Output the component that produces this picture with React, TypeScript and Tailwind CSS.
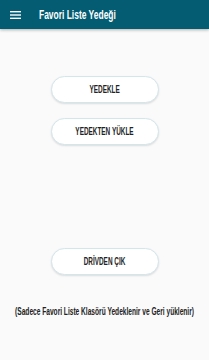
const font = { fontFamily: '"Liberation Sans", "DejaVu Sans", sans-serif' };

function PillButton({ label, className }: { label: string; className: string }) {
  return (
    <button
      className={`${className} w-[108px] h-[27px] rounded-full bg-white border border-[#d3e6ea] shadow-[0_1px_2px_rgba(0,0,0,0.12)] flex items-center justify-center`}
    >
      <span className="inline-block whitespace-nowrap text-[10px] font-bold text-[#222] scale-x-[0.64]">{label}</span>
    </button>
  );
}

export default function App() {
  return (
    <div className="w-[209px] h-[360px] flex flex-col bg-[#fafafa] overflow-hidden" style={font}>
      <div className="h-[29px] shrink-0 bg-[#035c72] flex items-center shadow-[0_1px_3px_rgba(0,0,0,0.3)]">
        <svg width="11" height="8" viewBox="0 0 11 8" className="ml-[10px]">
          <rect x="0" y="0" width="11" height="1.4" fill="#fff" />
          <rect x="0" y="3.3" width="11" height="1.4" fill="#fff" />
          <rect x="0" y="6.6" width="11" height="1.4" fill="#fff" />
        </svg>
        <span className="ml-[18px] inline-block whitespace-nowrap origin-left scale-x-[0.65] text-white text-[13px] font-bold">
          Favori Liste Yedeği
        </span>
      </div>
      <div className="flex flex-col items-center">
        <PillButton label="YEDEKLE" className="mt-[47px]" />
        <PillButton label="YEDEKTEN YÜKLE" className="mt-[15px]" />
        <PillButton label="DRİVDEN ÇIK" className="mt-[103px]" />
        <p className="mt-[29px] whitespace-nowrap inline-block scale-x-[0.66] text-[10px] font-bold text-[#222] text-center">
          (Sadece Favori Liste Klasörü Yedeklenir ve Geri yüklenir)
        </p>
      </div>
    </div>
  );
}
